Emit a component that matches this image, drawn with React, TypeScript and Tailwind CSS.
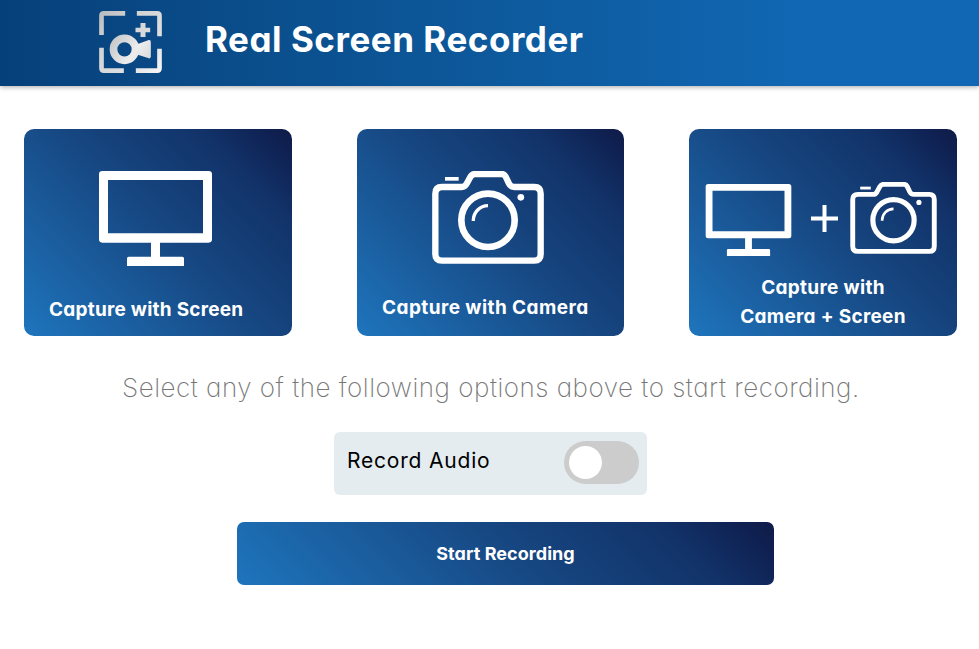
import type { ReactNode } from "react";

const blue = "bg-[linear-gradient(45deg,#1e75bd_0%,#1a5a9a_30%,#16457f_54%,#12336a_80%,#0f2152_94%,#0f1b47_100%)]";

function Logo() {
  return (
    <svg className="h-[62px] w-[63px] shrink-0" viewBox="58 33 188 186" fill="none">
      <defs>
        <linearGradient id="silver" x1="58" y1="33" x2="246" y2="219" gradientUnits="userSpaceOnUse">
          <stop offset="0" stopColor="#b9bbbe" />
          <stop offset="0.3" stopColor="#d0d2d4" />
          <stop offset="0.7" stopColor="#dedfe1" />
          <stop offset="1" stopColor="#f8f8f8" />
        </linearGradient>
        <linearGradient id="lens" x1="90" y1="105" x2="213" y2="190" gradientUnits="userSpaceOnUse">
          <stop offset="0" stopColor="#c0c1c4" />
          <stop offset="0.6" stopColor="#ededee" />
          <stop offset="1" stopColor="#d5d6d9" />
        </linearGradient>
      </defs>
      <path
        d="M65 105V47Q65 40 72 40H136M171 40H232Q239 40 239 47V109M65 143V205Q65 212 72 212H132M168 212H232Q239 212 239 205V146"
        stroke="url(#silver)"
        strokeWidth="14"
      />
      <path d="M182 69H197V83H211V97H197V111H182V97H167V83H182Z" fill="url(#silver)" />
      <path d="M174 132L207 120Q213 119 213 126V169Q213 176 207 175L174 164Z" fill="url(#lens)" />
      <circle cx="134" cy="148" r="33" stroke="url(#lens)" strokeWidth="23" />
    </svg>
  );
}

function Monitor({ className }: { className: string }) {
  return (
    <svg className={className} viewBox="252 153 339 285" fill="white">
      <path
        fillRule="evenodd"
        d="M262 153H581Q591 153 591 163V358Q591 368 581 368H435V410H502Q507 410 507 415V438H336V415Q336 410 341 410H408V368H262Q252 368 252 358V163Q252 153 262 153ZM279 180V340H564V180Z"
      />
    </svg>
  );
}

function Camera({ className }: { className: string }) {
  return (
    <svg className={className} viewBox="246 153 336 279" fill="none" stroke="white">
      <path
        strokeWidth="19"
        d="M256 221Q256 201 276 201H335Q345 201 350 191L361 171Q366 162 376 162H454Q463 162 467 170L477 191Q482 201 493 201H553Q572 201 572 221V402Q572 422 553 422H276Q256 422 256 402Z"
      />
      <circle cx="414" cy="301" r="80" strokeWidth="20" />
      <path d="M370 303V301A44 44 0 0 1 414 257" strokeWidth="10" />
      <path d="M285 176.5H326" strokeWidth="11" />
      <circle cx="512.500" cy="232" r="10" fill="white" stroke="none" />
    </svg>
  );
}

function Card({ className, children }: { className: string; children: ReactNode }) {
  return (
    <button
      className={`${blue} ${className} flex h-[207px] flex-col rounded-[10px] text-[19px] leading-[29px] font-[650] text-white`}
    >
      {children}
    </button>
  );
}

export default function App() {
  return (
    <div className="h-[649px] w-[979px] overflow-hidden bg-white font-['Inter',sans-serif] [font-feature-settings:'cv11']">
      <header className="flex h-[86px] items-start bg-[linear-gradient(90deg,#06407a_0%,#0a4c89_22%,#0d599c_50%,#1167b3_82%,#1167b3_100%)] pt-[11px] pl-[99px] shadow-[0_1px_5px_rgba(0,0,0,0.35)]">
        <Logo />
        <h1 className="mt-1 ml-[43px] text-[35px] leading-[48px] font-bold tracking-[0.53px] whitespace-nowrap text-white">
          Real Screen Recorder
        </h1>
      </header>
      <main>
        <div className="flex pt-[43px] pl-6">
          <Card className="w-[268px] items-start pt-[42px] pl-[25px]">
            <Monitor className="ml-[50px] h-[95px] w-[113px]" />
            <span className="mt-[29px] tracking-[0.24px] whitespace-nowrap">Capture with Screen</span>
          </Card>
          <Card className="ml-[65px] w-[267px] items-start pt-[42px] pl-[25px]">
            <Camera className="ml-[50px] h-[93px] w-[112px]" />
            <span className="mt-[29px] tracking-[0.43px] whitespace-nowrap">Capture with Camera</span>
          </Card>
          <Card className="ml-[65px] w-[268px] items-center pt-[53px]">
            <span className="flex h-[74px] w-full items-start pl-4">
              <Monitor className="mt-[2px] h-[72px] w-[87px]" />
              <svg className="mt-[23px] ml-[19px] h-[27px] w-[27px]" viewBox="0 0 27 27" stroke="white" strokeWidth="4">
                <path d="M0 13.500H27M13.500 0V27" />
              </svg>
              <Camera className="ml-[12px] h-[72px] w-[87px]" />
            </span>
            <span className="mt-[17px] tracking-[0.3px] whitespace-nowrap">Capture with</span>
            <span className="tracking-[0.3px] whitespace-nowrap">Camera + Screen</span>
          </Card>
        </div>
        <p className="mt-8 ml-[122px] text-[26px] leading-[40px] font-[250] tracking-[0.51px] whitespace-nowrap text-[#777]">
          Select any of the following options above to start recording.
        </p>
        <div className="mt-6 ml-[334px] flex h-[63px] w-[313px] items-start justify-between rounded-md bg-[#e4ecef] pt-[9px] pr-2 pl-[13px]">
          <span className="text-[21px] leading-[40px] tracking-[0.8px] whitespace-nowrap text-black">Record Audio</span>
          <button aria-label="Record Audio" className="flex h-[43px] w-[75px] items-center rounded-full bg-[#ccc] pl-[5px]">
            <span className="size-[33px] rounded-full bg-white" />
          </button>
        </div>
        <button
          className={`${blue} mt-[27px] ml-[237px] flex h-[63px] w-[537px] items-center justify-center rounded-[7px] text-[18px] font-[650] text-white`}
        >
          <span className="tracking-[0.05px] whitespace-nowrap">Start Recording</span>
        </button>
      </main>
    </div>
  );
}
